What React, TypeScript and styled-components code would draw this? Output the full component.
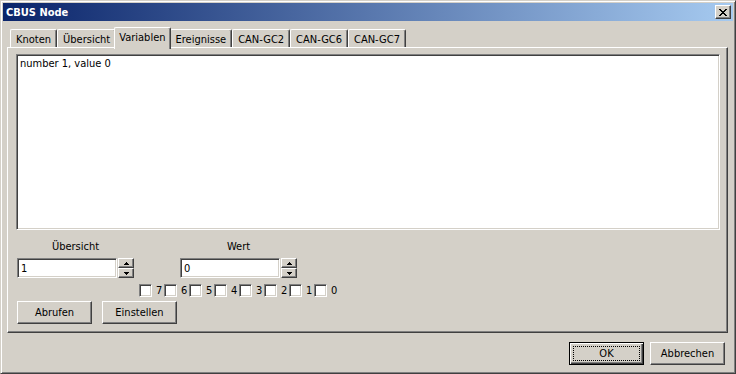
import React from "react";
import styled, { createGlobalStyle, css } from "styled-components";

const FONT = `"DejaVu Sans Condensed", "Liberation Sans", "DejaVu Sans", sans-serif`;

const Global = createGlobalStyle`
  html, body { margin: 0; padding: 0; background: #d4d0c8; }
  body { font-family: ${FONT}; font-size: 11px; color: #000; }
  * { box-sizing: border-box; }
`;

const raised = css`
  border: 1px solid;
  border-color: #fff #404040 #404040 #fff;
  box-shadow: inset -1px -1px #808080;
  background: #d4d0c8;
`;

const sunken = css`
  border: 1px solid;
  border-color: #808080 #fff #fff #808080;
  box-shadow: inset 1px 1px #404040, inset -1px -1px #d4d0c8;
  background: #fff;
`;

const Window = styled.div`
  width: 736px;
  height: 374px;
  background: #d4d0c8;
  border: 1px solid;
  border-color: #d4d0c8 #404040 #404040 #d4d0c8;
  box-shadow: inset 1px 1px #fff, inset -1px -1px #808080;
  padding: 2px;
  display: flex;
  flex-direction: column;
`;

const TitleBar = styled.div`
  height: 18px;
  flex: none;
  display: flex;
  align-items: center;
  justify-content: space-between;
  padding: 0 2px 0 3px;
  background: linear-gradient(to right, #0a246a, #a6caf0);
  color: #fff;
  font-weight: bold;
  font-size: 11px;
`;

const CloseButton = styled.div`
  ${raised};
  width: 16px;
  height: 14px;
  display: flex;
  align-items: center;
  justify-content: center;
  padding-right: 1px;
`;

const Client = styled.div`
  flex: 1;
  display: flex;
  flex-direction: column;
  padding: 6px 0 0 4px;
`;

const TabStrip = styled.div`
  display: flex;
  align-items: flex-end;
  height: 20px;
  padding-left: 3px;
  position: relative;
  z-index: 1;
`;

const Tab = styled.div<{ $active?: boolean }>`
  height: 18px;
  padding: 1px 5px 0;
  display: flex;
  align-items: center;
  justify-content: center;
  background: #d4d0c8;
  border-top: 1px solid #fff;
  border-left: 1px solid #fff;
  border-right: 1px solid #404040;
  border-top-left-radius: 2px;
  border-top-right-radius: 2px;
  box-shadow: inset -1px 0 #808080;
  white-space: nowrap;
  ${(p) =>
    p.$active &&
    css`
      height: 22px;
      margin: 0 -1px -2px -2px;
      padding: 0 4px 3px;
      position: relative;
    `}
`;

const Panel = styled.div`
  width: 721px;
  height: 286px;
  border: 1px solid;
  border-color: #fff #404040 #404040 #fff;
  box-shadow: inset -1px -1px #808080;
  padding: 6px 8px 0 8px;
  display: flex;
  flex-direction: column;
`;

const TextArea = styled.div`
  ${sunken};
  width: 704px;
  height: 176px;
  padding: 2px 3px;
  line-height: 13px;
`;

const Controls = styled.div`
  display: flex;
  gap: 46px;
  margin: 9px 0 0 1px;
`;

const SpinGroup = styled.div`
  display: flex;
  flex-direction: column;
  align-items: center;
`;

const Label = styled.div`
  height: 13px;
  line-height: 13px;
  margin: 1px 0 5px;
`;

const EditRow = styled.div`
  display: flex;
  gap: 1px;
`;

const Edit = styled.div`
  ${sunken};
  width: 100px;
  height: 20px;
  padding: 0 3px;
  display: flex;
  align-items: center;
`;

const Spinner = styled.div`
  display: flex;
  flex-direction: column;
  width: 16px;
  height: 20px;
`;

const SpinButton = styled.div`
  ${raised};
  height: 10px;
  display: flex;
  align-items: center;
  justify-content: center;
`;

const CheckRow = styled.div`
  display: flex;
  margin: 6px 0 0 123px;
`;

const CheckItem = styled.div`
  display: flex;
  align-items: center;
  width: 25px;
  height: 13px;
`;

const Box = styled.div`
  ${sunken};
  width: 13px;
  height: 13px;
  flex: none;
`;

const CheckLabel = styled.span`
  margin-left: 4px;
  line-height: 13px;
`;

const ButtonRow = styled.div<{ $end?: boolean }>`
  display: flex;
  gap: ${(p) => (p.$end ? "6px" : "10px")};
  justify-content: ${(p) => (p.$end ? "flex-end" : "flex-start")};
`;

const PanelButtons = styled(ButtonRow)`
  margin: 4px 0 0 1px;
`;

const Footer = styled(ButtonRow)`
  padding: 9px 8px 0 0;
`;

const Button = styled.div<{ $default?: boolean }>`
  ${raised};
  width: 75px;
  height: 23px;
  display: flex;
  align-items: center;
  justify-content: center;
  position: relative;
  ${(p) =>
    p.$default &&
    css`
      border-color: #000;
      box-shadow: inset 1px 1px #fff, inset -1px -1px #404040, inset -2px -2px #808080;
    `}
`;

const FocusRing = styled.div`
  position: absolute;
  inset: 3px;
  border: 1px dotted #000;
`;

const CloseGlyph = () => (
  <svg width="8" height="7" viewBox="0 0 8 7" shapeRendering="crispEdges">
    <path
      d="M0 0h2v1h-2z M6 0h2v1h-2z M1 1h2v1h-2z M5 1h2v1h-2z M2 2h4v1h-4z M3 3h2v1h-2z M2 4h4v1h-4z M1 5h2v1h-2z M5 5h2v1h-2z M0 6h2v1h-2z M6 6h2v1h-2z"
      fill="#000"
    />
  </svg>
);

const Arrow = ({ down }: { down?: boolean }) => (
  <svg width="5" height="3" viewBox="0 0 5 3" shapeRendering="crispEdges">
    <path
      d={down ? "M0 0h5v1h-5z M1 1h3v1h-3z M2 2h1v1h-1z" : "M2 0h1v1h-1z M1 1h3v1h-3z M0 2h5v1h-5z"}
      fill="#000"
    />
  </svg>
);

const SpinField = ({ label, value }: { label: string; value: string }) => (
  <SpinGroup>
    <Label>{label}</Label>
    <EditRow>
      <Edit>{value}</Edit>
      <Spinner>
        <SpinButton>
          <Arrow />
        </SpinButton>
        <SpinButton>
          <Arrow down />
        </SpinButton>
      </Spinner>
    </EditRow>
  </SpinGroup>
);

const tabs = ["Knoten", "Übersicht", "Variablen", "Ereignisse", "CAN-GC2", "CAN-GC6", "CAN-GC7"];
const bits = ["7", "6", "5", "4", "3", "2", "1", "0"];

export default function App() {
  return (
    <>
      <Global />
      <Window>
        <TitleBar>
          <span>CBUS Node</span>
          <CloseButton>
            <CloseGlyph />
          </CloseButton>
        </TitleBar>
        <Client>
          <TabStrip>
            {tabs.map((t) => (
              <Tab key={t} $active={t === "Variablen"}>
                {t}
              </Tab>
            ))}
          </TabStrip>
          <Panel>
            <TextArea>number 1, value 0</TextArea>
            <Controls>
              <SpinField label="Übersicht" value="1" />
              <SpinField label="Wert" value="0" />
            </Controls>
            <CheckRow>
              {bits.map((b) => (
                <CheckItem key={b}>
                  <Box />
                  <CheckLabel>{b}</CheckLabel>
                </CheckItem>
              ))}
            </CheckRow>
            <PanelButtons>
              <Button>Abrufen</Button>
              <Button>Einstellen</Button>
            </PanelButtons>
          </Panel>
          <Footer $end>
            <Button $default>
              OK
              <FocusRing />
            </Button>
            <Button>Abbrechen</Button>
          </Footer>
        </Client>
      </Window>
    </>
  );
}
